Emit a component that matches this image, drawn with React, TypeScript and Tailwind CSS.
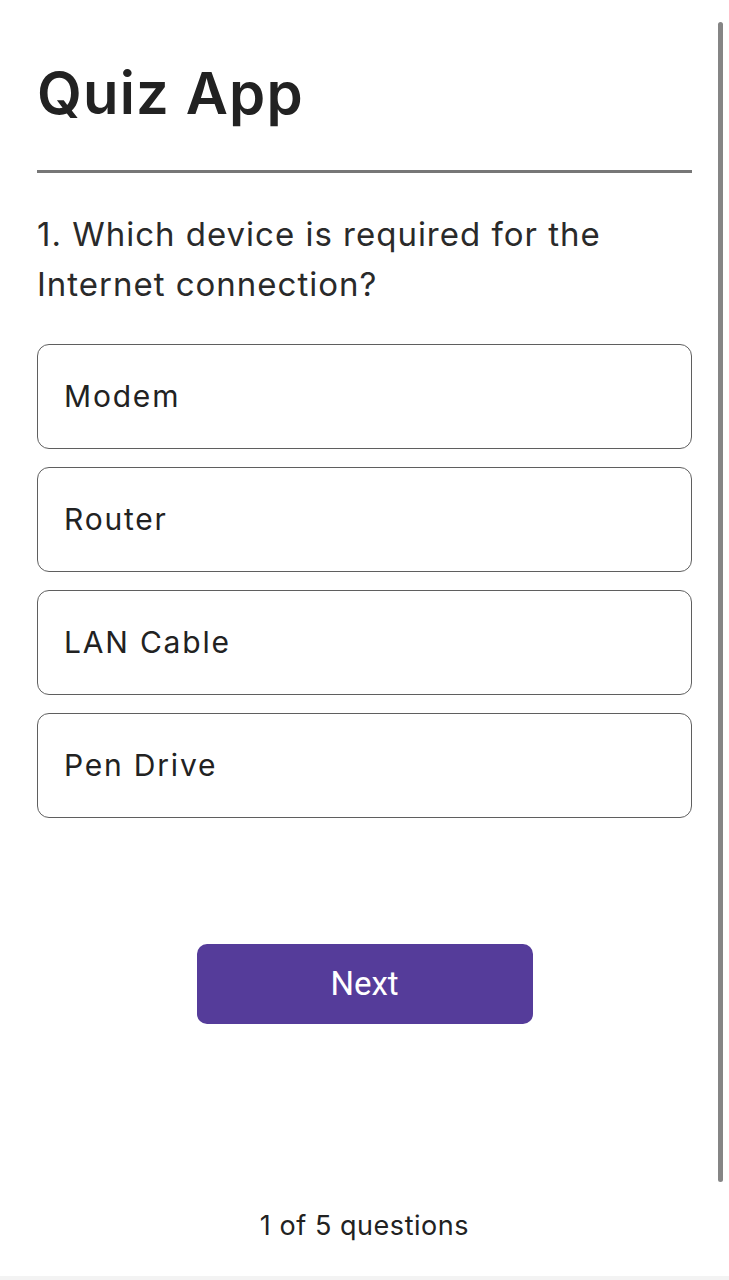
const options = ["Modem", "Router", "LAN Cable", "Pen Drive"];

export default function App() {
  return (
    <div className="relative flex h-[1280px] w-full flex-col overflow-hidden bg-white font-['Inter',sans-serif]">
      <div className="flex flex-col px-[37px]">
        <h1 className="mt-[64px] text-[58px] font-semibold leading-[58px] tracking-[0.02em] text-[#222]">Quiz App</h1>
        <div className="mt-[48px] h-[3px] bg-[#777]" />
        <p className="mt-[36px] text-[33px] leading-[50px] tracking-[0.03em] text-[#2a2a2a]">
          1. Which device is required for the Internet connection?
        </p>
        <div className="mt-[35px] flex flex-col gap-[18px]">
          {options.map((opt) => (
            <button
              key={opt}
              type="button"
              className="flex h-[105px] items-center rounded-[12px] border-[1.5px] border-[#5f5f5f] bg-white px-[26px] text-left text-[30px] tracking-[0.06em] text-[#222]"
            >
              {opt}
            </button>
          ))}
        </div>
        <button
          type="button"
          className="mx-auto mt-[126px] h-[80px] w-[336px] rounded-[10px] bg-[#553c9a] font-['Roboto',sans-serif] text-[33px] text-white"
        >
          Next
        </button>
      </div>
      <p className="mt-auto mb-[30px] text-center text-[27px] tracking-[0.02em] text-[#222]">1 of 5 questions</p>
      <div className="h-[4px] bg-[#f3f3f3]" />
      <div className="pointer-events-none absolute right-[6px] top-[22px] h-[1160px] w-[5px] rounded-full bg-[#858585]" />
    </div>
  );
}
